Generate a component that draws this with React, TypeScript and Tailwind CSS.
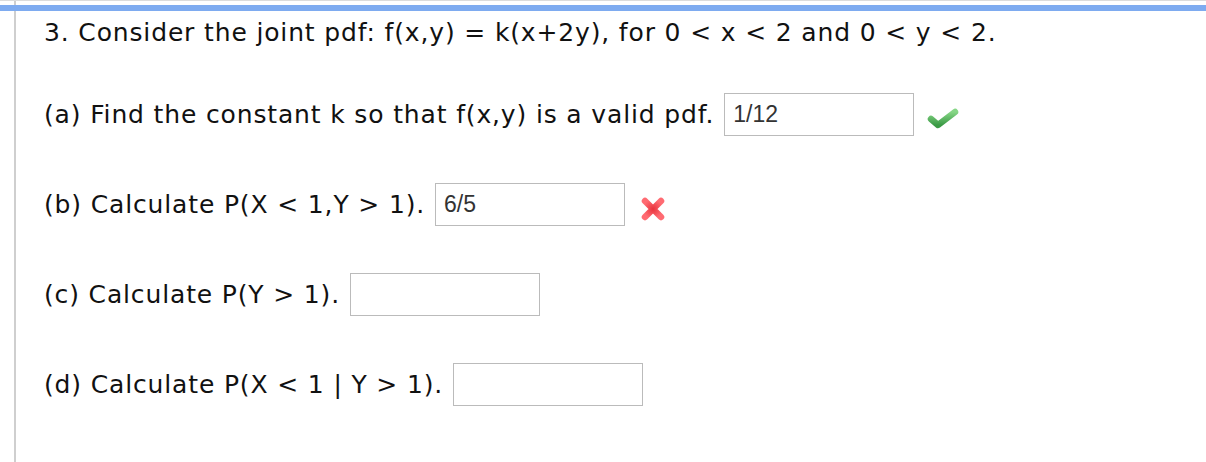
import React from "react";

const Check = () => (
  <svg width="34" height="22" viewBox="0 0 34 22" className="ml-[12px] mt-[6px]">
    <defs>
      <linearGradient id="ck" x1="0" y1="0" x2="0" y2="1">
        <stop offset="0" stopColor="#86d686" />
        <stop offset="1" stopColor="#3b9a45" />
      </linearGradient>
    </defs>
    <path
      d="M5 12 L12 18 L29 5"
      fill="none"
      stroke="url(#ck)"
      strokeWidth="6.5"
      strokeLinecap="round"
      strokeLinejoin="round"
    />
  </svg>
);

const Cross = () => (
  <svg width="30" height="30" viewBox="0 0 30 30" className="ml-[13px] mt-[8px]">
    <defs>
      <radialGradient id="cx" cx="0.5" cy="0.5" r="0.6">
        <stop offset="0" stopColor="#e8323c" />
        <stop offset="1" stopColor="#ff6b72" />
      </radialGradient>
    </defs>
    <path
      d="M7 7 L23 23 M23 7 L7 23"
      fill="none"
      stroke="url(#cx)"
      strokeWidth="6.5"
      strokeLinecap="round"
    />
  </svg>
);

const Answer = ({ value }: { value?: string }) => (
  <input
    readOnly
    defaultValue={value ?? ""}
    className="ml-[10px] h-[43px] w-[190px] border border-[#bbb] bg-white pl-[8px] pr-[4px] text-[23px] tracking-normal text-[#333] outline-none font-['Liberation_Sans',Arial,sans-serif]"
  />
);

const Row = ({ label, children, first }: { label: string; children?: React.ReactNode; first?: boolean }) => (
  <div className={`${first ? "mt-[46px]" : "mt-[47px]"} flex h-[43px] items-center`}>
    <span className="whitespace-pre">{label}</span>
    {children}
  </div>
);

export default function App() {
  return (
    <div className="flex h-[462px] w-[1206px] flex-col overflow-hidden border-t border-[#dcdcdc] bg-white font-['DejaVu_Sans',Verdana,sans-serif] text-[25px] tracking-[0.85px] text-[#111]">
      <div className="h-[4px] pl-[14px]">
        <div className="h-full border-l-2 border-[#cfcfcf]" />
      </div>
      <div className="h-[6px] bg-[#7eabf0]" />
      <div className="flex-1 pl-[14px]">
        <div className="h-full border-l-2 border-[#cfcfcf] pl-[28px] pt-[8px]">
          <div className="leading-[28px] whitespace-pre">
            3. Consider the joint pdf: f(x,y) = k(x+2y), for 0 &lt; x &lt; 2 and 0 &lt; y &lt; 2.
          </div>
          <Row first label="(a) Find the constant k so that f(x,y) is a valid pdf.">
            <Answer value="1/12" />
            <Check />
          </Row>
          <Row label="(b) Calculate P(X < 1,Y > 1).">
            <Answer value="6/5" />
            <Cross />
          </Row>
          <Row label="(c) Calculate P(Y > 1).">
            <Answer />
          </Row>
          <Row label="(d) Calculate P(X < 1 | Y > 1).">
            <Answer />
          </Row>
        </div>
      </div>
    </div>
  );
}
